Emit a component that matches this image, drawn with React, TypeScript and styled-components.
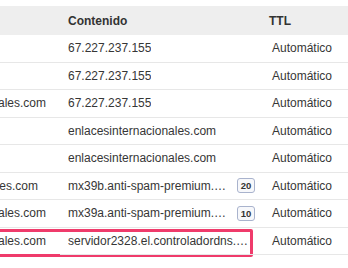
import styled, { createGlobalStyle } from "styled-components";

const GlobalStyle = createGlobalStyle`
  html, body {
    margin: 0;
    padding: 0;
    background: #ffffff;
    overflow: hidden;
  }
  body {
    font-family: "Liberation Sans", Arial, sans-serif;
    color: #363636;
  }
`;

const Page = styled.div`
  width: 348px;
  height: 268px;
  overflow: hidden;
  padding-top: 6px;
  box-sizing: border-box;
`;

const Table = styled.div`
  margin-left: -110px;
  width: 458px;
  display: grid;
  grid-template-columns: 170px 204px 84px;
`;

const HeaderCell = styled.div<{ $inset?: number }>`
  height: 29px;
  display: flex;
  align-items: center;
  background: #eeeeee;
  padding-left: ${({ $inset }) => $inset ?? 8}px;
  font-size: 12px;
  font-weight: bold;
  color: #333333;
`;

const Row = styled.div`
  display: contents;
`;

const Cell = styled.div<{ $trail?: number }>`
  position: relative;
  height: 27.5px;
  box-sizing: border-box;
  display: flex;
  align-items: center;
  gap: 5px;
  min-width: 0;
  padding: 0 ${({ $trail }) => $trail ?? 9}px 0 8px;
  border-bottom: 1px solid #e7e7e7;
  font-size: 12px;
  white-space: nowrap;
`;

const NameCell = styled(Cell)`
  justify-content: flex-end;
  padding: 0 14px 0 0;
`;

const Name = styled.span<{ $shift?: number }>`
  margin-right: ${({ $shift }) => $shift ?? 0}px;
`;

const Clip = styled.span`
  overflow: hidden;
  text-overflow: ellipsis;
  min-width: 0;
`;

const Badge = styled.span`
  flex: none;
  width: 18px;
  height: 15px;
  box-sizing: border-box;
  display: flex;
  align-items: center;
  justify-content: center;
  border: 1px solid #a9b3cd;
  border-radius: 3px;
  background: #f7f8fb;
  font-size: 9.5px;
  font-weight: bold;
  color: #333333;
`;

const Highlight = styled.div`
  position: absolute;
  left: 0;
  top: 1px;
  width: 363px;
  height: 28px;
  box-sizing: border-box;
  border: 3px solid #ef3b6b;
  border-radius: 2px;
  pointer-events: none;
`;

type Rec = { name: string; content: string; prio?: number; shift?: number; boxed?: boolean };

const records: Rec[] = [
  { name: "", content: "67.227.237.155" },
  { name: "", content: "67.227.237.155" },
  { name: "enlacesinternacionales.com", content: "67.227.237.155" },
  { name: "", content: "enlacesinternacionales.com" },
  { name: "", content: "enlacesinternacionales.com" },
  { name: "enlacesinternacionales.com", content: "mx39b.anti-spam-premium.com", prio: 20, shift: 8 },
  { name: "enlacesinternacionales.com", content: "mx39a.anti-spam-premium.com", prio: 10 },
  { name: "enlacesinternacionales.com", content: "servidor2328.el.controladordns.com", boxed: true },
];

export default function App() {
  return (
    <Page>
      <GlobalStyle />
      <Table>
        <HeaderCell>Nombre</HeaderCell>
        <HeaderCell>Contenido</HeaderCell>
        <HeaderCell $inset={5}>TTL</HeaderCell>
        {records.map((r, i) => (
          <Row key={i}>
            <NameCell>
              <Name $shift={r.shift}>{r.name}</Name>
              {r.boxed && <Highlight />}
            </NameCell>
            <Cell $trail={r.boxed ? 12 : 9}>
              <Clip>{r.content}</Clip>
              {r.prio !== undefined && <Badge>{r.prio}</Badge>}
            </Cell>
            <Cell>Automático</Cell>
          </Row>
        ))}
      </Table>
    </Page>
  );
}
